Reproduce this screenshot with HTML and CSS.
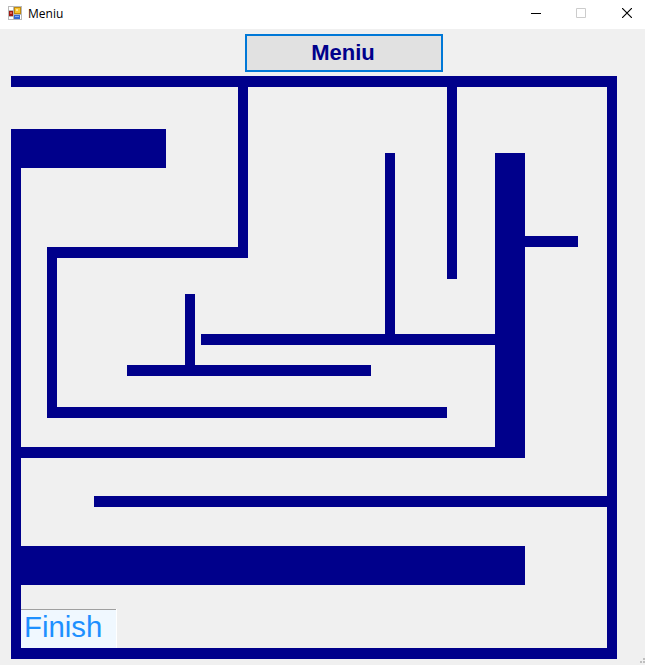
FILE: index.html
```
<!DOCTYPE html>
<html lang="ro">
<head>
<meta charset="utf-8">
<title>Meniu</title>
<link rel="stylesheet" href="styles.css">
</head>
<body>
<div class="window">
  <header class="titlebar">
    <svg class="app-icon" width="14" height="14" viewBox="0 0 14 14" shape-rendering="crispEdges">
      <path fill="#b9b9b9" d="M0 0h14v14H0z"/>
      <path fill="#fff" d="M1 1h4v3H1zM1 11h4v2H1zM6 9h7v4H6z"/>
      <path fill="#c08a10" d="M6 1h7v7H6z"/>
      <path fill="#f8c430" d="M7 2h5v5H7z"/>
      <path fill="#ffe89a" d="M8 3h2v2H8z"/>
      <path fill="#a01810" d="M1 5h4v5H1z"/>
      <path fill="#e06050" d="M2 6h2v2H2z"/>
      <path fill="#3468d0" d="M6 9h6v4H6z"/>
      <path fill="#80a8f4" d="M7 10h4v1H7z"/>
    </svg>
    <span class="title">Meniu</span>
    <div class="controls">
      <svg width="10" height="10" viewBox="0 0 10 10"><path fill="#000" d="M0 5h10v1H0z"/></svg>
      <svg width="10" height="10" viewBox="0 0 10 10"><path fill="none" stroke="#ccc" d="M.5.5h9v9h-9z"/></svg>
      <svg class="close" width="10" height="10" viewBox="0 0 10 10"><path fill="none" stroke="#000" stroke-width="1.15" d="M0 0l10 10M10 0L0 10"/></svg>
    </div>
  </header>
  <main class="form">
    <button class="menu-button">Meniu</button>
    <div class="maze">
      <svg class="walls" width="606" height="583" viewBox="11 76 606 583" shape-rendering="crispEdges">
        <!-- outer walls -->
        <rect x="11" y="76" width="606" height="11"/>
        <rect x="607" y="76" width="10" height="583"/>
        <rect x="11" y="648" width="606" height="11"/>
        <rect x="11" y="129" width="10" height="530"/>
        <!-- inner walls -->
        <rect x="11" y="129" width="155" height="39"/>
        <rect x="238" y="76" width="10" height="182"/>
        <rect x="47" y="247" width="201" height="11"/>
        <rect x="47" y="247" width="10" height="171"/>
        <rect x="47" y="407" width="400" height="11"/>
        <rect x="447" y="76" width="10" height="203"/>
        <rect x="385" y="153" width="10" height="185"/>
        <rect x="201" y="334" width="300" height="11"/>
        <rect x="495" y="153" width="30" height="305"/>
        <rect x="525" y="236" width="53" height="11"/>
        <rect x="185" y="294" width="10" height="75"/>
        <rect x="127" y="365" width="244" height="11"/>
        <rect x="11" y="447" width="514" height="11"/>
        <rect x="94" y="496" width="520" height="11"/>
        <rect x="11" y="546" width="514" height="39"/>
      </svg>
      <div class="finish">Finish</div>
    </div>
    <svg class="grip" width="5" height="5" viewBox="0 0 5 5"><path fill="#bfbfbf" d="M3 0h2v2H3zM0 3h2v2H0zM3 3h2v2H3z"/></svg>
  </main>
</div>
</body>
</html>
```
FILE: styles.css
```
* { box-sizing: border-box; }
body {
  margin: 0;
  font-family: "Liberation Sans", Arial, sans-serif;
}
.window {
  position: relative;
  display: flex;
  flex-direction: column;
  width: 645px;
  height: 665px;
  overflow: hidden;
  background: #f0f0f0;
}
.titlebar {
  display: flex;
  align-items: center;
  height: 29px;
  padding: 0 13px 3px 8px;
  background: #fff;
}
.title {
  margin-left: 6px;
  padding-top: 1px;
  font: 12px/17px "Open Sans", "Noto Sans", sans-serif;
  color: #000;
}
.controls {
  display: flex;
  gap: 35px;
  margin-left: auto;
}
.controls svg { display: block; }
.controls .close { margin-left: 1px; }
.form {
  flex: 1;
  padding: 5px 28px 0 11px;
}
.menu-button {
  display: block;
  width: 198px;
  height: 38px;
  margin: 0 0 4px 234px;
  padding: 0 2px 0 0;
  border: 2px solid #0078d7;
  background: #e1e1e1;
  color: #00008b;
  font: bold 22px/34px "Liberation Sans", Arial, sans-serif;
}
.maze {
  position: relative;
  width: 606px;
  height: 583px;
}
.walls {
  display: block;
  fill: #00008b;
}
.finish {
  position: absolute;
  left: 10px;
  bottom: 11px;
  width: 95px;
  height: 39px;
  padding-left: 3px;
  border-top: 1px solid #a0a0a0;
  box-shadow: 1px 0 #fff;
  background: #f0f8ff;
  color: #1e90ff;
  font-size: 29.33px;
  line-height: 33px;
}
.grip {
  position: absolute;
  right: 0;
  bottom: 2px;
}
```
